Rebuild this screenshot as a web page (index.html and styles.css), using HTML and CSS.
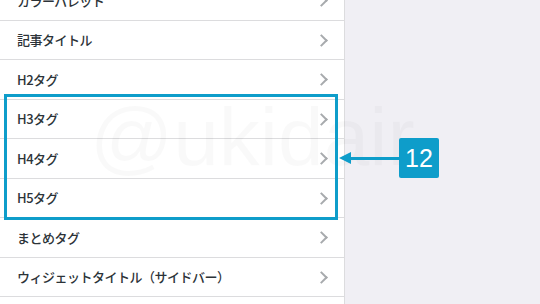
FILE: index.html
```html
<!DOCTYPE html>
<html lang="ja">
<head>
  <meta charset="UTF-8" />
  <meta name="viewport" content="width=device-width, initial-scale=1" />
  <title>カスタマイザー</title>
  <link rel="stylesheet" href="styles.css">
</head>
<body>
  <div class="screen">
    <!-- Customizer sidebar -->
    <aside class="panel">
      <ul class="sections">
        <li class="section">カラーパレット</li>
        <li class="section">記事タイトル</li>
        <li class="section">H2タグ</li>
        <li class="section">H3タグ</li>
        <li class="section">H4タグ</li>
        <li class="section">H5タグ</li>
        <li class="section">まとめタグ</li>
        <li class="section">ウィジェットタイトル（サイドバー）</li>
        <li class="section">&nbsp;</li>
      </ul>
    </aside>

    <main class="preview"></main>

    <div class="watermark">@ukidair</div>

    <!-- annotation -->
    <div class="highlight"></div>
    <div class="pointer">
      <span class="pointer-head"></span>
      <span class="pointer-line"></span>
      <span class="badge">12</span>
    </div>
  </div>
</body>
</html>
```

FILE: styles.css
```css
* {
  box-sizing: border-box;
}

body {
  margin: 0;
  font-family: 'Noto Sans CJK JP', 'Noto Sans', sans-serif;
  background: #f0eff4;
  color: #2c3338;
}

.screen {
  position: relative;
  display: flex;
  width: 540px;
  height: 304px;
  overflow: hidden;
}

.panel {
  width: 345px;
  flex: none;
  background: #ffffff;
  border-right: 1px solid #dcdcde;
}

.sections {
  list-style: none;
  margin: -19px 0 0;
  padding: 0;
}

.section {
  display: flex;
  align-items: center;
  height: 39.5px;
  padding: 0 20px 0 17px;
  border-bottom: 1px solid #dcdcde;
  font-size: 13px;
  font-weight: 500;
  letter-spacing: -0.5px;
  position: relative;
}

.section::after {
  content: "";
  position: absolute;
  right: 18px;
  top: 50%;
  width: 7px;
  height: 7px;
  margin-top: -4px;
  border-top: 2px solid #a7aaad;
  border-right: 2px solid #a7aaad;
  transform: rotate(45deg);
}

.preview {
  flex: 1;
  background: #f0eff4;
}

.highlight {
  position: absolute;
  left: 4px;
  top: 94px;
  width: 334px;
  height: 126px;
  border: 3px solid #0e9dca;
}

.pointer {
  position: absolute;
  left: 339px;
  top: 138px;
  display: flex;
  align-items: center;
  height: 40px;
}

.pointer-head {
  width: 0;
  height: 0;
  border-top: 6px solid transparent;
  border-bottom: 6px solid transparent;
  border-right: 12px solid #0e9dca;
}

.pointer-line {
  width: 48px;
  height: 3px;
  background: #0e9dca;
}

.badge {
  width: 40px;
  height: 40px;
  border-radius: 2px;
  background: #0e9dca;
  color: #ffffff;
  font-family: 'Liberation Sans', Arial, sans-serif;
  font-size: 25px;
  display: flex;
  align-items: center;
  justify-content: center;
}

.watermark {
  position: absolute;
  left: 90px;
  top: 90px;
  font-family: 'Liberation Sans', Arial, sans-serif;
  font-size: 82px;
  color: rgba(0, 0, 0, 0.022);
  pointer-events: none;
  white-space: nowrap;
}
```
